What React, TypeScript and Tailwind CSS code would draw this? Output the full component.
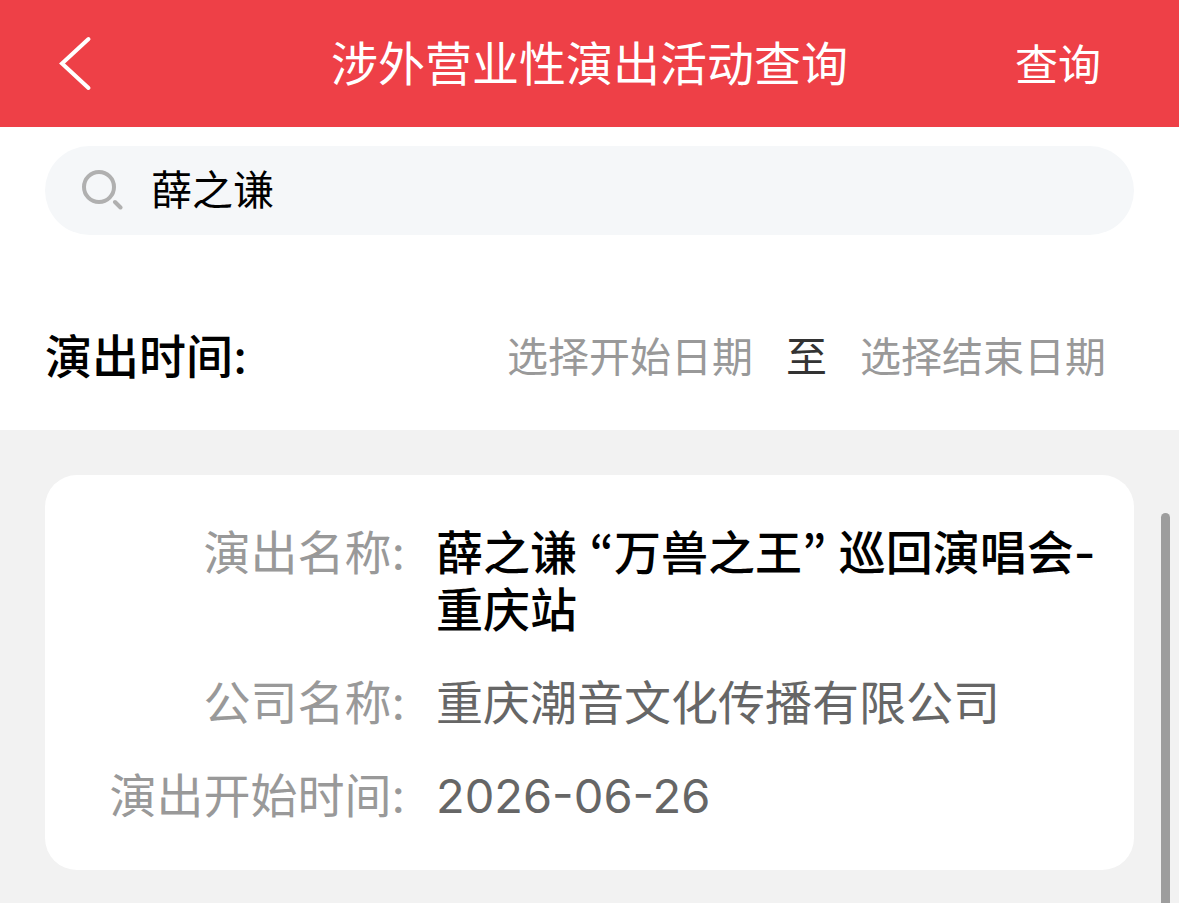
import React from "react";

interface Performance {
  name: string;
  company: string;
  startDate: string;
}

const performances: Performance[] = [
  {
    name: "薛之谦 “万兽之王” 巡回演唱会-重庆站",
    company: "重庆潮音文化传播有限公司",
    startDate: "2026-06-26",
  },
];

// Inter's quotes are slanted wedges, the Korean face has round proportional ones
const renderName = (name: string) =>
  name.split(/([“”])/).map((part, i) =>
    part === "“" || part === "”" ? (
      <span key={i} className="font-['Noto_Sans_CJK_KR',sans-serif] leading-none">
        {part}
      </span>
    ) : (
      part
    )
  );

const PerformanceCard: React.FC<{ item: Performance }> = ({ item }) => {
  return (
    <dl className="grid grid-cols-[320px_1fr] gap-x-[31px] rounded-[32px] bg-white pt-[49px] pr-6 pb-[46px] pl-10 text-[47px] leading-[57px]">
      <dt className="text-right text-[#999999]">演出名称:</dt>
      <dd className="font-medium text-black">{renderName(item.name)}</dd>
      <dt className="mt-9 text-right text-[#999999]">公司名称:</dt>
      <dd className="mt-9 text-[#666666]">{item.company}</dd>
      <dt className="mt-9 text-right text-[#999999]">演出开始时间:</dt>
      <dd className="mt-9 text-[#666666]">{item.startDate}</dd>
    </dl>
  );
};

export default function App() {
  const [keyword, setKeyword] = React.useState("薛之谦");

  return (
    <div className="flex h-screen flex-col overflow-hidden bg-[#f2f2f2] font-[Inter,'Noto_Sans_CJK_SC',sans-serif]">
      <header className="grid h-[127px] shrink-0 grid-cols-[1fr_auto_1fr] items-center bg-[#ee4047] text-white">
        <button type="button" aria-label="返回" className="ml-14 justify-self-start">
          <svg width="38" height="56" viewBox="0 0 38 56" fill="none" stroke="currentColor" strokeWidth="4">
            <path d="M32.5 3 6 27.500 32.5 52" strokeLinecap="round" />
          </svg>
        </button>
        <h1 className="text-[47px] leading-[58px]">涉外营业性演出活动查询</h1>
        <button type="button" className="mr-[78px] justify-self-end pt-1 text-[43px]">
          查询
        </button>
      </header>

      <section className="shrink-0 bg-white px-[45px] pt-[19px] pb-[43px]">
        <label className="flex h-[89px] items-center gap-7 rounded-full bg-[#f5f7f9] pl-9">
          <svg width="42" height="42" viewBox="0 0 42 42" fill="none" stroke="#b0b0b0" strokeWidth="4">
            <circle cx="18" cy="17" r="15" />
            <path d="m34 32 5.500 5.500" strokeLinecap="round" />
          </svg>
          <input
            type="text"
            aria-label="搜索"
            value={keyword}
            onChange={(e) => setKeyword(e.target.value)}
            className="min-w-0 flex-1 bg-transparent text-[41px] text-black outline-none"
          />
        </label>
        <div className="mt-[92px] flex items-center justify-between pr-7">
          <h2 className="text-[47px] leading-[60px] font-medium text-black">演出时间:</h2>
          <div className="flex items-center gap-[33px] text-[41px] leading-[60px]">
            <button type="button" className="text-[#999999]">
              选择开始日期
            </button>
            <span className="text-[#333333]">至</span>
            <button type="button" className="text-[#999999]">
              选择结束日期
            </button>
          </div>
        </div>
      </section>

      <main className="relative flex-1 px-[45px] pt-[45px]">
        {performances.map((item) => (
          <PerformanceCard key={item.name} item={item} />
        ))}
        <div className="absolute top-[83px] right-[9px] bottom-0 w-[9px] rounded-t-full bg-[#9d9d9d]"></div>
      </main>
    </div>
  );
}
